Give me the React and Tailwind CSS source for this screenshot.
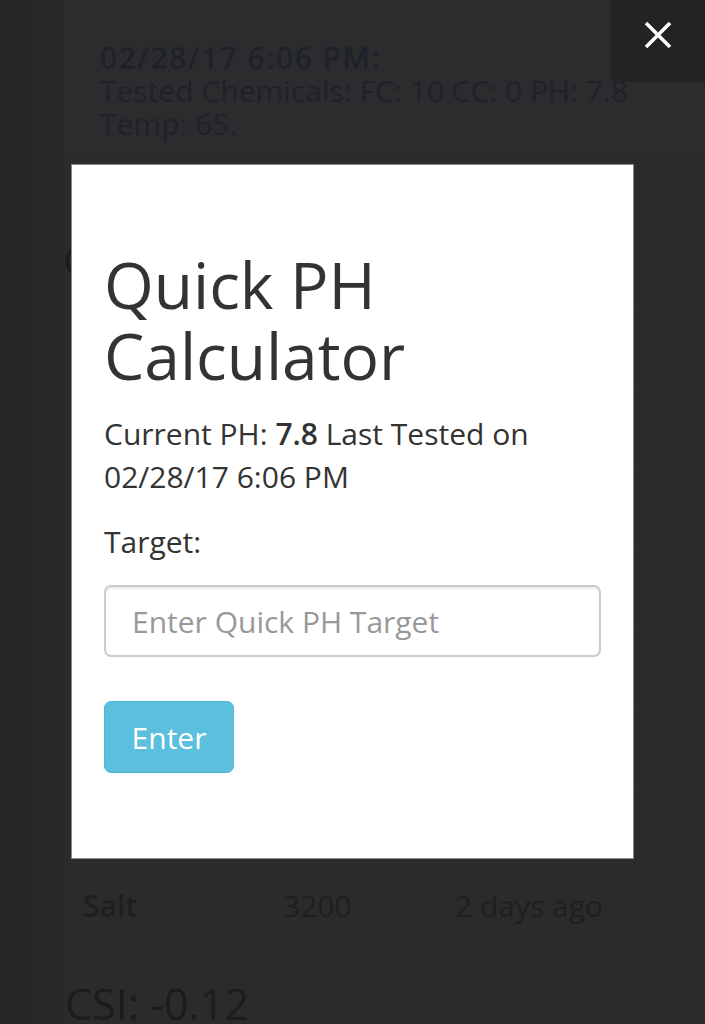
import React from 'react'

// chemical table behind the modal; only the last row is uncovered
const rows = [
    { name: 'Free Chlorine', value: '10', when: '2 days ago' },
    { name: 'Combined Chlorine', value: '0', when: '2 days ago' },
    { name: 'PH', value: '7.8', when: '2 days ago' },
    { name: 'Alkalinity', value: '90', when: '2 days ago' },
    { name: 'Calcium', value: '250', when: '2 days ago' },
    { name: 'Cyanuric Acid', value: '40', when: '2 days ago' },
    { name: 'Temp', value: '65', when: '2 days ago' },
    { name: 'Salt', value: '3200', when: '2 days ago' },
]

function CloseIcon() {
    return (
        <svg width="28" height="28" viewBox="0 0 28 28" fill="none">
            <path d="M2 2 L26 26 M26 2 L2 26" stroke="#ffffff" strokeWidth="3.6" />
        </svg>
    )
}

export default function App() {
    return (
        <div className="relative w-[705px] h-[1024px] overflow-hidden bg-[#28282a] font-['Open_Sans',sans-serif]">
            {/* page behind the overlay */}
            <div className="flex h-full">
                <div className="w-[63px] shrink-0 flex">
                    <div className="w-[32px] bg-[#27272a]" />
                    <div className="flex-1 bg-[#29292b]" />
                </div>
                <div className="flex-1 bg-[#2b2b2d]">
                    <div className="h-[155px] bg-[#2c2c2e] pl-[37px] pt-[41px] text-[30px] leading-[33px]">
                        <div className="font-semibold tracking-[1.5px] text-[#1e222b]">02/28/17 6:06 PM:</div>
                        <div className="text-[#1f2228]">Tested Chemicals: FC: 10 CC: 0 PH: 7.8</div>
                        <div className="text-[#1f2228]">Temp: 65.</div>
                    </div>
                    <h2 className="mt-[83px] text-[40px] leading-[44px] text-[#1c1c1e]">Chemicals</h2>
                    <div className="mt-[23px]">
                        {rows.map((row) => (
                            <div key={row.name} className="flex items-center h-[80px] border-t border-[#303033] text-[30px] text-[#1f1f21]">
                                <div className="w-[220px] pl-[20px] font-semibold whitespace-nowrap">{row.name}</div>
                                <div className="w-[172px]">{row.value}</div>
                                <div className="whitespace-nowrap">{row.when}</div>
                            </div>
                        ))}
                    </div>
                    <h2 className="mt-[37px] pl-[2px] text-[43px] leading-[44px] text-[#1c1c1e]">CSI: -0.12</h2>
                </div>
            </div>

            {/* close button */}
            <div className="absolute right-0 top-0 w-[94px] h-[82px] bg-[#232325] flex items-center justify-center pb-[12px]">
                <CloseIcon />
            </div>

            {/* modal */}
            <div className="absolute left-[71px] top-[164px] w-[563px] h-[695px] bg-white border border-[#8a8a8a] px-[32px] text-[#333333]">
                <h1 className="pt-[84px] text-[64px] leading-[71px] font-normal">Quick PH Calculator</h1>
                <p className="mt-[21px] text-[30px] leading-[43px]">
                    Current PH: <span className="font-semibold">7.8</span> Last Tested on 02/28/17 6:06 PM
                </p>
                <div className="mt-[22px] text-[30px] leading-[43px]">Target:</div>
                <input
                    type="text"
                    placeholder="Enter Quick PH Target"
                    className="mt-[22px] w-full h-[72px] rounded-[7px] border-2 border-[#cccccc] px-[26px] text-[30px] text-[#555] placeholder:text-[#999999] shadow-[inset_0_2px_2px_rgba(0,0,0,0.08)] outline-none"
                />
                <div className="mt-[44px]">
                    <button className="h-[72px] w-[130px] rounded-[7px] bg-[#5bc0de] border border-[#4fb9d8] text-white text-[30px]">
                        Enter
                    </button>
                </div>
            </div>
        </div>
    )
}
